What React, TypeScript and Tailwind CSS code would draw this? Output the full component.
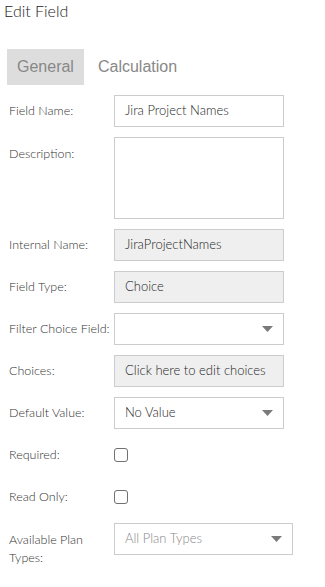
const font = { fontFamily: 'Lato, "Open Sans", sans-serif' };

const Caret = () => (
    <svg width="11" height="6" viewBox="0 0 11 6" className="shrink-0">
        <path d="M0 0 H11 L5.5 6 Z" fill="#7a7a7a"/>
    </svg>
);

const Row = ({label, top, children}: {label: string; top?: boolean; children: React.ReactNode}) => (
    <div className={`flex ${top ? 'items-start' : 'items-center'}`}>
        <label className={`w-[105px] shrink-0 pr-[18px] text-[12.5px] leading-[18px] text-[#333] ${top ? 'pt-[8px]' : 'whitespace-nowrap'}`}>
            {label}
        </label>
        {children}
    </div>
);

const Box = ({children, grey, wide}: {children?: React.ReactNode; grey?: boolean; wide?: boolean}) => (
    <div
        className={`flex h-[32px] items-center justify-between whitespace-nowrap border border-[#cccccc] px-[10px] text-[13px] text-[#1e1e1e] ${
            grey ? 'bg-[#efefef]' : 'bg-white'
        } ${wide ? 'w-[179px]' : 'w-[170px]'}`}>
        {children}
    </div>
);

const Check = () => (
    <div className="flex h-[32px] items-center">
        <span className="block h-[14px] w-[14px] rounded-[3px] border border-[#707070] bg-white"/>
    </div>
);

export default function App() {
    return (
        <div className="min-h-screen bg-white font-light" style={font}>
            <h1 className="pl-[4px] pt-[1px] text-[16px] leading-5 text-[#222]">Edit Field</h1>

            <div className="mt-[28px] flex items-center pl-[7px] font-normal" style={{fontFamily: '"Liberation Sans", Arial, sans-serif'}}>
                <button className="h-[36px] bg-[#dddddd] px-[10px] text-[16px] text-[#888]">General</button>
                <button className="h-[36px] px-[14px] text-[16px] text-[#888]">Calculation</button>
            </div>

            <div className="mt-[10px] flex flex-col gap-[10px] pl-[9px]">
                <Row label="Field Name:">
                    <Box>Jira Project Names</Box>
                </Row>
                <Row label="Description:" top>
                    <div className="h-[82px] w-[170px] border border-[#cccccc] bg-white"/>
                </Row>
                <Row label="Internal Name:">
                    <Box grey>JiraProjectNames</Box>
                </Row>
                <Row label="Field Type:">
                    <Box grey>Choice</Box>
                </Row>
                <Row label="Filter Choice Field:">
                    <Box>
                        <span/>
                        <Caret/>
                    </Box>
                </Row>
                <Row label="Choices:">
                    <Box grey>Click here to edit choices</Box>
                </Row>
                <Row label="Default Value:">
                    <Box>
                        <span>No Value</span>
                        <Caret/>
                    </Box>
                </Row>
                <Row label="Required:">
                    <Check/>
                </Row>
                <Row label="Read Only:">
                    <Check/>
                </Row>
                <Row label="Available Plan Types:" top>
                    <Box wide>
                        <span className="text-[#888]">All Plan Types</span>
                        <Caret/>
                    </Box>
                </Row>
            </div>
        </div>
    );
}
